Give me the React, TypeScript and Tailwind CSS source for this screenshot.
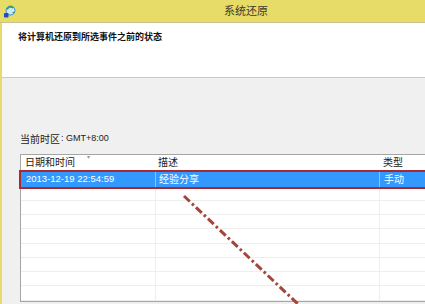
import React from "react";

const cjk = "font-['Liberation_Sans','Noto_Sans_CJK_SC',sans-serif]";

function RestoreIcon() {
  return (
    <svg width="13" height="13" viewBox="0 0 13 13" className="shrink-0">
      <circle cx="7.5" cy="5.5" r="4.5" fill="#cfe6f5" stroke="#3b8fd0" strokeWidth="1" />
      <path d="M4 4.5 A4 4 0 0 1 10.5 3" fill="none" stroke="#3aa040" strokeWidth="1.6" />
      <path d="M9 7.5 L11.5 6.5 L11 9 Z" fill="#3aa040" />
      <rect x="1" y="8" width="4.5" height="4.5" rx="0.8" fill="#1d4fbf" />
    </svg>
  );
}

const emptyRows = [12, 14, 14, 15, 14, 14, 14, 15];

export default function App() {
  return (
    <div className={`relative w-[425px] h-[304px] overflow-hidden bg-[#f0f0f0] ${cjk}`}>
      {/* title bar */}
      <div className="flex h-[23px] items-center bg-[#e8dc68] border-b border-[#c9c08a]">
        <div className="ml-[3px]">
          <RestoreIcon />
        </div>
        <span className="ml-[208px] text-[11px] leading-none text-[#3a3a2a]">系统还原</span>
      </div>

      <div className="flex flex-col border-l-[2px] border-[#e8dc68] h-[281px]">
        {/* header */}
        <div className="h-[55px] bg-white border-b border-[#c8c8c8] pl-[16px] pt-[8px]">
          <div className="text-[9px] font-bold leading-[12px] text-[#111]">将计算机还原到所选事件之前的状态</div>
        </div>

        {/* body */}
        <div className="flex flex-col pl-[18px] pt-[55px]">
          <div className="flex items-center h-[12px] text-[#222]">
            <span className="text-[10px]">当前时区</span>
            <span className="text-[9px] ml-[1px]">: GMT+8:00</span>
          </div>

          <div className="mt-[9px] w-[430px] bg-white border border-[#a5a5a5]">
            {/* column header */}
            <div className="relative flex h-[15px] items-center text-[10px] text-[#222]">
              <span className="w-[134px] pl-[4px]">日期和时间</span>
              <span className="w-[224px] pl-[3px]">描述</span>
              <span className="pl-[4px]">类型</span>
              <span className="absolute left-[66px] top-[-2px] text-[6px] text-[#9a9a9a]">▾</span>
            </div>

            {/* selected row with annotation frame */}
            <div className="-ml-[2px] border-2 border-[#a82a2e]">
              <div className="flex h-[15px] items-center bg-[#3399ff] text-white">
                <span className="w-[134px] pl-[5px] text-[9.5px]">2013-12-19 22:54:59</span>
                <span className="w-[224px] h-full flex items-center pl-[3px] border-l border-[#8cc4ff] text-[10px]">经验分享</span>
                <span className="h-full flex items-center pl-[4px] border-l border-[#8cc4ff] text-[10px]">手动</span>
              </div>
            </div>

            {emptyRows.map((h, i) => (
              <div
                key={i}
                className="flex border-b border-[#eeeeee]"
                style={{ height: h }}
              >
                <div className="w-[134px]" />
                <div className="w-[224px] border-l border-[#efefef]" />
                <div className="flex-1 border-l border-[#efefef]" />
              </div>
            ))}
          </div>
        </div>
      </div>

      {/* annotation line */}
      <svg className="absolute left-0 top-0 pointer-events-none" width="425" height="304">
        <line
          x1="184"
          y1="196"
          x2="300"
          y2="306"
          stroke="#a4453c"
          strokeWidth="3"
          strokeDasharray="8 3 2.5 3"
        />
      </svg>
    </div>
  );
}
